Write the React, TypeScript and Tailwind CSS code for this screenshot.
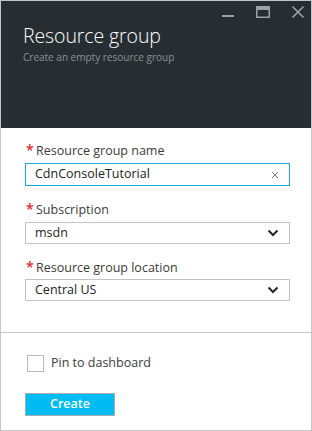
import { useState } from 'react'

const font = { fontFamily: '"Open Sans", "Noto Sans", sans-serif' }

function Label({ text }: { text: string }) {
  return (
    <div className="flex items-center h-[16px] text-[12.5px] text-[#3b3b3b] leading-none">
      <span className="text-[#e3262c] text-[14px] font-semibold w-[10px] -mt-[3px] ml-[1px]">*</span>
      <span>{text}</span>
    </div>
  )
}

function Chevron() {
  return (
    <svg width="12" height="8" viewBox="0 0 12 8" className="mr-[1px]">
      <path d="M1.5 1.5 L6 6 L10.5 1.5" fill="none" stroke="#2b2b2b" strokeWidth="2.2" />
    </svg>
  )
}

function Select({ value }: { value: string }) {
  return (
    <div className="w-[265px] h-[22px] border border-[#c3c3c3] bg-white flex items-center justify-between pl-[9px] pr-[9px] text-[12.5px] text-[#222]">
      <span>{value}</span>
      <Chevron />
    </div>
  )
}

export default function App() {
  const [pinned, setPinned] = useState(false)

  return (
    <div style={font} className="w-[312px] h-[431px] border border-[#c6c6c6] bg-white flex flex-col overflow-hidden">
      {/* blade header */}
      <div className="h-[127px] bg-[#272e33] relative shrink-0">
        <div className="absolute top-[4px] right-[6px] flex items-start">
          <svg width="14" height="14" viewBox="0 0 14 14" className="mr-[21px]">
            <rect x="1" y="10" width="12" height="2" fill="#9ca1a5" />
          </svg>
          <svg width="14" height="14" viewBox="0 0 14 14" className="mr-[21px]">
            <rect x="0.75" y="1.75" width="12.5" height="10.5" fill="none" stroke="#9ca1a5" strokeWidth="1.5" />
            <rect x="1" y="2" width="12" height="3" fill="#9ca1a5" />
          </svg>
          <svg width="14" height="14" viewBox="0 0 14 14">
            <path d="M1.5 1.5 L12.5 12.5 M12.5 1.5 L1.5 12.5" stroke="#9ca1a5" strokeWidth="1.6" />
          </svg>
        </div>
        <div className="pl-[22px] pt-[24px]">
          <div className="text-[19.5px] font-light text-white leading-[22px] tracking-[-0.1px]">Resource group</div>
          <div className="text-[10px] text-[#8b9195] mt-[4px] leading-[12px]">Create an empty resource group</div>
        </div>
      </div>

      {/* form */}
      <div className="pl-[24px] pt-[15px]">
        <Label text="Resource group name" />
        <div className="mt-[4px] w-[265px] h-[23px] border border-[#1aa7dc] flex items-center justify-between pl-[9px] pr-[10px] text-[12.5px] text-[#222]">
          <span>CdnConsoleTutorial</span>
          <svg width="8" height="8" viewBox="0 0 8 8">
            <path d="M1 1 L7 7 M7 1 L1 7" stroke="#777" strokeWidth="1" />
          </svg>
        </div>

        <div className="mt-[16px]">
          <Label text="Subscription" />
        </div>
        <div className="mt-[4px]">
          <Select value="msdn" />
        </div>

        <div className="mt-[16px]">
          <Label text="Resource group location" />
        </div>
        <div className="mt-[3px]">
          <Select value="Central US" />
        </div>
      </div>

      <div className="mt-[31px] h-px bg-[#c6c6c6] shrink-0" />

      <div className="pl-[24px] pt-[21px]">
        <label className="flex items-center gap-[7px] cursor-pointer">
          <button
            onClick={() => setPinned(!pinned)}
            className="ml-[2px] w-[17px] h-[17px] border border-[#b9b9b9] bg-white"
            aria-label="Pin to dashboard"
          />
          <span className="text-[12.5px] text-[#3b3b3b]">Pin to dashboard</span>
        </label>
        <button className="mt-[20px] w-[90px] h-[23px] bg-[#00bcf2] border border-[#acacac] text-white text-[12.5px] font-semibold leading-none">
          Create
        </button>
      </div>
    </div>
  )
}
